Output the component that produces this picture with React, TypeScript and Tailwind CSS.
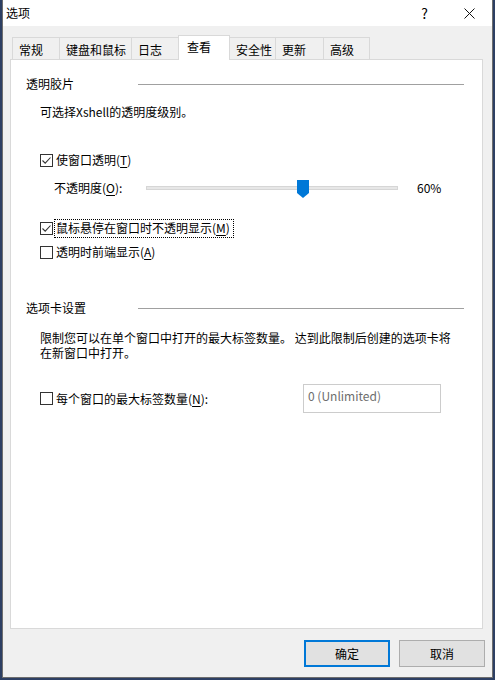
import { ReactNode } from "react";

const tabs = [
  { label: "常规", w: "w-[48px]" },
  { label: "键盘和鼠标", w: "w-[73px]" },
  { label: "日志", w: "w-[48px]" },
  { label: "查看", w: "w-[52px]", active: true },
  { label: "安全性", w: "w-[47px]" },
  { label: "更新", w: "w-[49px]" },
  { label: "高级", w: "w-[47px]" },
];

function CheckBox({ checked }: { checked?: boolean }) {
  return (
    <span className="flex h-[13px] w-[13px] flex-none items-center justify-center border border-[#333333] bg-white">
      {checked && (
        <svg width="11" height="11" viewBox="0 0 11 11">
          <path d="M1.5 5.5 L4.2 8.2 L9.5 2.5" fill="none" stroke="#333333" strokeWidth="1.1" />
        </svg>
      )}
    </span>
  );
}

function Key({ children }: { children: ReactNode }) {
  return <span className="underline underline-offset-[2px]">{children}</span>;
}

function SectionHeader({ title, className }: { title: string; className: string }) {
  return (
    <div className={`flex h-[20px] items-center pl-[15px] pr-[18px] ${className}`}>
      <span className="w-[112px] flex-none">{title}</span>
      <div className="h-px flex-1 bg-[#a0a0a0]" />
    </div>
  );
}

export default function App() {
  return (
    <div className="h-[680px] w-[495px] bg-[#2d3f63] pl-[2px] font-['Noto_Sans_CJK_SC','Microsoft_YaHei',sans-serif] text-[12px] text-black">
      <div className="flex h-[678px] w-[491px] flex-col border-x border-b border-[#6e6e6e]">
        {/* title bar */}
        <div className="flex h-[26px] flex-none items-center bg-white pl-[3px]">
          <span className="flex-1 leading-[16px]">选项</span>
          <span className="flex w-[45px] justify-center text-[14px] leading-[16px]">?</span>
          <span className="flex w-[45px] justify-center">
            <svg width="11" height="11" viewBox="0 0 11 11">
              <path d="M0.5 0.5 L10.5 10.5 M10.5 0.5 L0.5 10.5" stroke="#111" strokeWidth="1" />
            </svg>
          </span>
        </div>

        <div className="flex flex-1 flex-col bg-[#f0f0f0] pt-[9px]">
          {/* tabs */}
          <div className="ml-[9px] flex h-[24px] items-end">
            {tabs.map((t, i) =>
              t.active ? (
                <div
                  key={t.label}
                  className={`relative z-10 -mb-px flex h-[25px] items-center border border-b-0 border-[#d9d9d9] bg-white pb-[2px] pl-[8px] ${t.w} ${i > 0 ? "-ml-px" : ""}`}
                >
                  {t.label}
                </div>
              ) : (
                <div
                  key={t.label}
                  className={`flex h-[22px] items-center border border-b-0 border-[#d9d9d9] bg-[#f0f0f0] pl-[6px] pt-[2px] ${t.w} ${i > 0 ? "-ml-px" : ""}`}
                >
                  {t.label}
                </div>
              )
            )}
          </div>

          {/* panel */}
          <div className="ml-[7px] mr-[9px] h-[570px] flex-none border border-[#d9d9d9] bg-white">
            <SectionHeader title="透明胶片" className="mt-[14px]" />

            <div className="mt-[8px] flex h-[20px] items-center pl-[29px]">
              可选择Xshell的透明度级别。
            </div>

            <div className="mt-[28px] flex h-[20px] items-center gap-[3px] pl-[29px]">
              <CheckBox checked />
              <span>
                使窗口透明(<Key>T</Key>)
              </span>
            </div>

            <div className="mt-[8px] flex h-[20px] items-center pl-[43px]">
              <span className="w-[92px] flex-none">
                不透明度(<Key>O</Key>):
              </span>
              <div className="relative h-[4px] w-[252px] flex-none border border-[#d6d6d6] bg-[#e7e7e7]">
                <svg
                  className="absolute left-[150px] top-[-7px]"
                  width="12"
                  height="18"
                  viewBox="0 0 12 18"
                >
                  <path d="M0 0 H12 V13 L6 18 L0 13 Z" fill="#0078d7" />
                </svg>
              </div>
              <span className="ml-[19px]">60%</span>
            </div>

            <div className="mt-[20px] flex h-[20px] items-center pl-[29px]">
              <CheckBox checked />
              <span className="ml-[1px] flex h-[19px] items-center border border-dotted border-black pl-px pr-[3px]">
                鼠标悬停在窗口时不透明显示(<Key>M</Key>)
              </span>
            </div>

            <div className="mt-[4px] flex h-[20px] items-center gap-[3px] pl-[29px]">
              <CheckBox />
              <span>
                透明时前端显示(<Key>A</Key>)
              </span>
            </div>

            <SectionHeader title="选项卡设置" className="mt-[36px]" />

            <p className="mt-[12px] pl-[29px] pr-[20px] leading-[15px]">
              限制您可以在单个窗口中打开的最大标签数量。 达到此限制后创建的选项卡将
              <br />
              在新窗口中打开。
            </p>

            <div className="mt-[24px] flex h-[29px] items-center pl-[29px]">
              <div className="flex w-[263px] flex-none items-center gap-[3px]">
                <CheckBox />
                <span>
                  每个窗口的最大标签数量(<Key>N</Key>):
                </span>
              </div>
              <div className="h-[29px] w-[138px] flex-none border border-[#cccccc] bg-white pl-[4px] pt-[3px] leading-[16px] text-[#6d6d6d]">
                0 (Unlimited)
              </div>
            </div>
          </div>

          {/* buttons */}
          <div className="mr-[7px] mt-[11px] flex justify-end gap-[9px]">
            <button className="flex h-[27px] w-[86px] items-center justify-center border-2 border-[#0078d7] bg-[#e1e1e1]">
              确定
            </button>
            <button className="flex h-[27px] w-[86px] items-center justify-center border border-[#adadad] bg-[#e1e1e1]">
              取消
            </button>
          </div>
        </div>
      </div>
    </div>
  );
}
